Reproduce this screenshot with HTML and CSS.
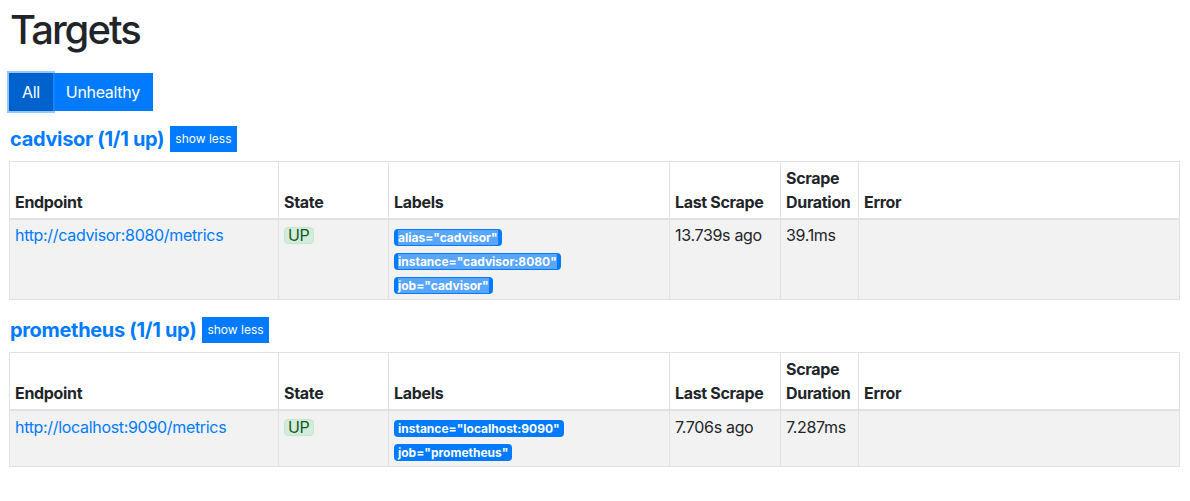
FILE: index.html
```html
<!DOCTYPE html>
<html lang="en">
 <head>
  <meta charset="utf-8">
  <title>Targets</title>
  <link rel="stylesheet" href="styles.css">
 </head>
 <body>
  <div class="page">
   <h1 class="title">Targets</h1>
   <div class="btn-group">
    <button class="btn btn-active" type="button">All</button>
    <button class="btn" type="button">Unhealthy</button>
   </div>

   <div class="pool-head">
    <a class="pool-name" href="#pool-cadvisor">cadvisor (1/1 up)</a>
    <button class="btn-toggle" type="button">show less</button>
   </div>
   <table class="targets" id="pool-cadvisor">
    <colgroup>
     <col class="c-endpoint"><col class="c-state"><col class="c-labels"><col class="c-last"><col class="c-dur"><col>
    </colgroup>
    <thead>
     <tr>
      <th>Endpoint</th>
      <th>State</th>
      <th>Labels</th>
      <th>Last Scrape</th>
      <th>Scrape Duration</th>
      <th>Error</th>
     </tr>
    </thead>
    <tbody>
     <tr>
      <td><a href="#">http://cadvisor:8080/metrics</a></td>
      <td><span class="health">UP</span></td>
      <td>
       <div class="label-row"><span class="label"><span class="sel">alias="cadvisor"</span></span></div>
       <div class="label-row"><span class="label"><span class="sel">instance="cadvisor:8080"</span></span></div>
       <div class="label-row"><span class="label"><span class="sel">job="cadvisor"</span></span></div>
      </td>
      <td>13.739s ago</td>
      <td>39.1ms</td>
      <td></td>
     </tr>
    </tbody>
   </table>

   <div class="pool-head">
    <a class="pool-name" href="#pool-prometheus">prometheus (1/1 up)</a>
    <button class="btn-toggle" type="button">show less</button>
   </div>
   <table class="targets" id="pool-prometheus">
    <colgroup>
     <col class="c-endpoint"><col class="c-state"><col class="c-labels"><col class="c-last"><col class="c-dur"><col>
    </colgroup>
    <thead>
     <tr>
      <th>Endpoint</th>
      <th>State</th>
      <th>Labels</th>
      <th>Last Scrape</th>
      <th>Scrape Duration</th>
      <th>Error</th>
     </tr>
    </thead>
    <tbody>
     <tr>
      <td><a href="#">http://localhost:9090/metrics</a></td>
      <td><span class="health">UP</span></td>
      <td>
       <div class="label-row"><span class="label">instance="localhost:9090"</span></div>
       <div class="label-row"><span class="label">job="prometheus"</span></div>
      </td>
      <td>7.706s ago</td>
      <td>7.287ms</td>
      <td></td>
     </tr>
    </tbody>
   </table>
  </div>
 </body>
</html>
```

FILE: styles.css
```css
body {
    margin: 0;
    font-family: Inter, "Liberation Sans", sans-serif;
    font-size: 16px;
    line-height: 1.5;
    letter-spacing: -0.02em;
    color: #212529;
    background: #fff;
}

a {
    color: #007bff;
    text-decoration: none;
}

.page {
    padding: 6px 10px 0 9px;
}

.title {
    margin: 0 0 19px 1px;
    font-size: 40px;
    font-weight: 500;
    line-height: 1.2;
    letter-spacing: -0.05em;
}

.btn-group {
    display: flex;
    margin-bottom: 15px;
}

.btn {
    font: inherit;
    letter-spacing: inherit;
    color: #fff;
    background: #007bff;
    border: 1px solid #007bff;
    padding: 6px 12px;
    line-height: 24px;
    border-radius: 0;
    cursor: pointer;
}

.btn-active {
    background: #0062cc;
    border-color: #005cbf;
    box-shadow: 0 0 0 2px rgba(38, 143, 255, .5);
    position: relative;
}

.pool-head {
    display: flex;
    align-items: center;
    gap: 6px;
    margin-bottom: 9px;
}

.pool-name {
    font-size: 20px;
    font-weight: 700;
    line-height: 26px;
    padding-left: 1px;
}

.btn-toggle {
    font: inherit;
    font-size: 12px;
    line-height: 18px;
    padding: 4px 5px;
    color: #fff;
    background: #007bff;
    border: 0;
    border-radius: 0;
    cursor: pointer;
}

.targets {
    width: 1171px;
    table-layout: fixed;
    border-collapse: collapse;
    margin-bottom: 17px;
}

.c-endpoint { width: 269px; }
.c-state { width: 110px; }
.c-labels { width: 281px; }
.c-last { width: 111px; }
.c-dur { width: 78px; }

.targets th,
.targets td {
    border: 1px solid #dee2e6;
    padding: 3.8px 5px;
    text-align: left;
    vertical-align: top;
}

.targets th {
    vertical-align: bottom;
    border-bottom-width: 2px;
    font-weight: 700;
}

.targets tbody tr {
    background: #f2f2f2;
}

.health {
    display: inline-block;
    padding: 0 3px;
    line-height: 15px;
    margin-top: 3px;
    color: #155724;
    background: #d4edda;
    border: 1px solid #c3e6cb;
    border-radius: 4px;
}

.label-row {
    line-height: 24px;
}

.label {
    display: inline-block;
    font-size: 12px;
    font-weight: 700;
    line-height: 17px;
    padding: 0 4px;
    letter-spacing: 0;
    color: #fff;
    background: #007bff;
    border-radius: 4px;
    vertical-align: middle;
}

.sel {
    background: #58a6ff;
}
```
